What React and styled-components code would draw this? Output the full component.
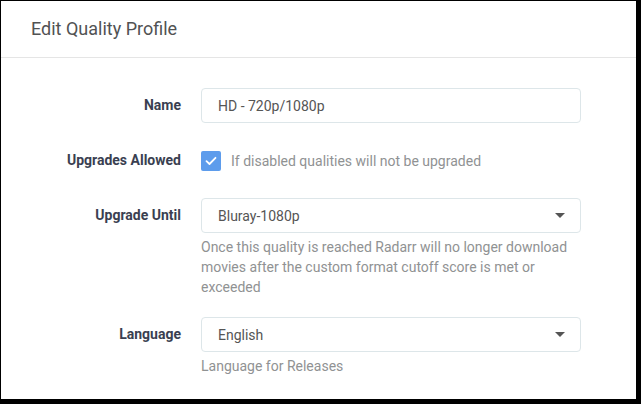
import React from 'react'
import styled, { createGlobalStyle } from 'styled-components'

const Global = createGlobalStyle`
  body{
    margin:0;
    background:#000;
    font-family: Roboto, "Open Sans", "Liberation Sans", sans-serif;
  }
`

const Panel = styled.div`
  margin:1px 0 0 1px;
  width:635px;
  height:398px;
  background:#fff;
  overflow:hidden;
`

const Header = styled.div`
  padding:15px 30px;
  line-height:26px;
  font-size:18px;
  color:#515253;
  border-bottom:1px solid #e5e5e5;
`

const Body = styled.div`
  padding:30px;
  display:flex;
  flex-direction:column;
  gap:20px;
`

const Group = styled.div`
  display:flex;
  align-items:flex-start;
  gap:20px;
`

const Label = styled.div`
  width:150px;
  flex:none;
  text-align:right;
  font-weight:700;
  font-size:14px;
  line-height:35px;
  color:#3a3f51;
`

const Control = styled.div`
  width:380px;
  flex:none;
  display:flex;
  flex-direction:column;
`

const Input = styled.div`
  box-sizing:border-box;
  height:35px;
  padding:0 16px;
  border:1px solid #dde6e9;
  border-radius:4px;
  display:flex;
  align-items:center;
  justify-content:space-between;
  font-size:14px;
  color:#555;
`

const Caret = styled.span`
  width:0;
  height:0;
  border-left:5px solid transparent;
  border-right:5px solid transparent;
  border-top:5px solid #555;
  margin-right:-1px;
`

const Help = styled.div`
  margin-top:4px;
  font-size:14px;
  line-height:20px;
  color:#909293;
`

const CheckRow = styled.label`
  height:35px;
  display:flex;
  align-items:center;
  gap:10px;
  font-size:14px;
  color:#909293;
`

const Box = styled.span`
  width:20px;
  height:20px;
  border-radius:2px;
  background:#5d9cec;
  display:flex;
  align-items:center;
  justify-content:center;
`

function Select({ value }) {
  return (
    <Input>
      <span>{value}</span>
      <Caret />
    </Input>
  )
}

export default function App() {
  return (
    <>
      <Global />
      <Panel>
        <Header>Edit Quality Profile</Header>
        <Body>
          <Group>
            <Label>Name</Label>
            <Control>
              <Input>HD - 720p/1080p</Input>
            </Control>
          </Group>
          <Group>
            <Label>Upgrades Allowed</Label>
            <Control>
              <CheckRow>
                <Box>
                  <svg width="12" height="10" viewBox="0 0 12 10">
                    <path d="M1.5 5.2 L4.5 8 L10.5 1.8" fill="none" stroke="#fff" strokeWidth="1.8" strokeLinecap="round" strokeLinejoin="round" />
                  </svg>
                </Box>
                If disabled qualities will not be upgraded
              </CheckRow>
            </Control>
          </Group>
          <Group>
            <Label>Upgrade Until</Label>
            <Control>
              <Select value="Bluray-1080p" />
              <Help>Once this quality is reached Radarr will no longer download movies after the custom format cutoff score is met or exceeded</Help>
            </Control>
          </Group>
          <Group>
            <Label>Language</Label>
            <Control>
              <Select value="English" />
              <Help>Language for Releases</Help>
            </Control>
          </Group>
        </Body>
      </Panel>
    </>
  )
}
